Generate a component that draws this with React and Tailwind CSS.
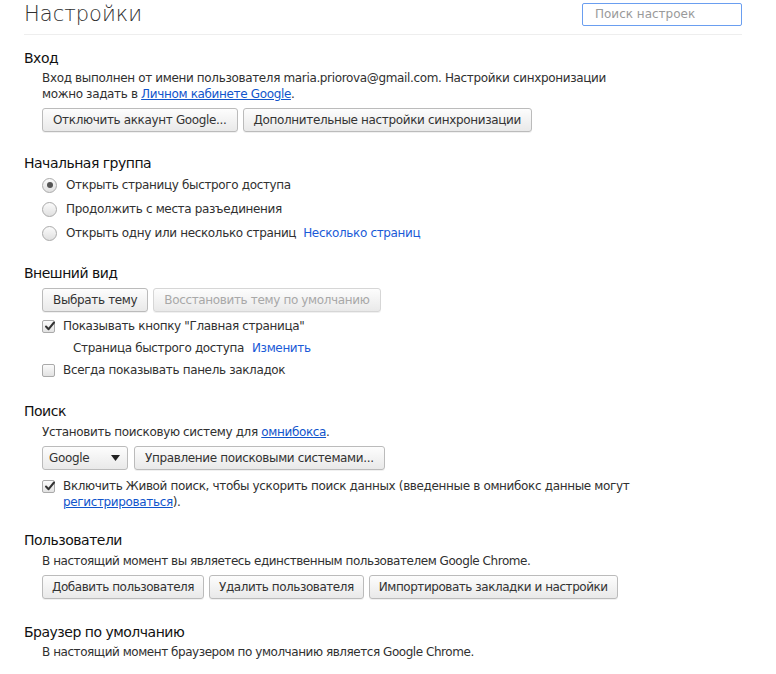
import React from "react";

const Btn = ({ children, disabled, className = "px-[10px]" }) => (
  <button
    className={
      "h-[24px] rounded-[3px] border text-[12px] tracking-[-0.35px] leading-none whitespace-nowrap bg-gradient-to-b from-[#fdfdfd] to-[#e9e9e9] shadow-[0_1px_0_rgba(0,0,0,0.06)] " +
      (disabled ? "border-[#d6d6d6] text-[#a8a8a8]" : "border-[#bbbbbb] text-[#333]") +
      " " +
      className
    }
  >
    {children}
  </button>
);

const Radio = ({ checked }) => (
  <span className="w-[15px] h-[15px] rounded-full border border-[#aaaaaa] bg-gradient-to-b from-[#fbfbfb] to-[#e0e0e0] flex items-center justify-center shrink-0">
    {checked && <span className="w-[6px] h-[6px] rounded-full bg-[#555]" />}
  </span>
);

const Check = ({ checked }) => (
  <span className="w-[13px] h-[13px] rounded-[2px] border border-[#aaaaaa] bg-gradient-to-b from-[#fbfbfb] to-[#e2e2e2] flex items-center justify-center shrink-0 relative">
    {checked && (
      <svg width="12" height="12" viewBox="0 0 12 12" className="absolute left-[1px] top-[-1px]">
        <path d="M2 6.5 L4.6 9.2 L10 2.5" fill="none" stroke="#333" strokeWidth="2" strokeLinecap="round" strokeLinejoin="round" />
      </svg>
    )}
  </span>
);

const H = ({ children, className = "" }) => (
  <div className={"h-[20px] leading-[20px] text-[14px] tracking-[-0.5px] text-[#111] " + className}>{children}</div>
);

export default function App() {
  return (
    <div className="w-[776px] h-[674px] bg-white font-['DejaVu_Sans',sans-serif] text-[#303030] text-[12px] tracking-[-0.35px] pl-[24px] pr-[34px] overflow-hidden">
      <div className="h-[35px] flex items-center justify-between pb-[6px] border-b border-[#eeeeee]">
        <div className="text-[21px] leading-none text-[#303030] font-light tracking-normal">Настройки</div>
        <div className="w-[160px] h-[23px] border border-[#6a9ef0] rounded-[2px] flex items-center pl-[12px] text-[12px] tracking-normal text-[#9a9a9a]">
          Поиск настроек
        </div>
      </div>

      {/* Вход */}
      <H className="mt-[13px]">Вход</H>
      <div className="pl-[18px] mt-[2px]">
        <div className="leading-[16px]">
          Вход выполнен от имени пользователя maria.priorova@gmail.com. Настройки синхронизации
          <br />
          можно задать в <span className="text-[#1155cc] underline">Личном кабинете Google</span>.
        </div>
        <div className="flex gap-[5px] mt-[6px]">
          <Btn>Отключить аккаунт Google...</Btn>
          <Btn>Дополнительные настройки синхронизации</Btn>
        </div>
      </div>

      {/* Начальная группа */}
      <H className="mt-[21px]">Начальная группа</H>
      <div className="pl-[18px]">
        <div className="h-[24px] flex items-center gap-[9px]">
          <Radio checked />
          <span>Открыть страницу быстрого доступа</span>
        </div>
        <div className="h-[24px] flex items-center gap-[9px]">
          <Radio />
          <span>Продолжить с места разъединения</span>
        </div>
        <div className="h-[24px] flex items-center gap-[9px]">
          <Radio />
          <span>Открыть одну или несколько страниц</span>
          <span className="text-[#1a5ad7] ml-[-2px]">Несколько страниц</span>
        </div>
      </div>

      {/* Внешний вид */}
      <H className="mt-[18px]">Внешний вид</H>
      <div className="pl-[18px]">
        <div className="flex gap-[5px] mt-[5px]">
          <Btn>Выбрать тему</Btn>
          <Btn disabled>Восстановить тему по умолчанию</Btn>
        </div>
        <div className="mt-[3px] h-[22px] flex items-center gap-[8px]">
          <Check checked />
          <span>Показывать кнопку "Главная страница"</span>
        </div>
        <div className="h-[22px] flex items-center pl-[31px] gap-[8px]">
          <span>Страница быстрого доступа</span>
          <span className="text-[#1a5ad7]">Изменить</span>
        </div>
        <div className="h-[22px] flex items-center gap-[8px]">
          <Check />
          <span>Всегда показывать панель закладок</span>
        </div>
      </div>

      {/* Поиск */}
      <H className="mt-[20px]">Поиск</H>
      <div className="pl-[18px]">
        <div className="mt-[3px] leading-[16px]">
          Установить поисковую систему для <span className="text-[#1155cc] underline">омнибокса</span>.
        </div>
        <div className="flex gap-[6px] mt-[6px]">
          <div className="h-[24px] w-[86px] rounded-[3px] border border-[#bbbbbb] bg-gradient-to-b from-[#fdfdfd] to-[#e9e9e9] flex items-center justify-between pl-[6px] pr-[7px] text-[#333]">
            <span>Google</span>
            <svg width="9" height="6" viewBox="0 0 9 6">
              <path d="M0 0 H9 L4.5 6 Z" fill="#222" />
            </svg>
          </div>
          <Btn>Управление поисковыми системами...</Btn>
        </div>
        <div className="mt-[8px] flex gap-[8px]">
          <div className="h-[16px] flex items-center">
            <Check checked />
          </div>
          <div className="leading-[16px]">
            Включить Живой поиск, чтобы ускорить поиск данных (введенные в омнибокс данные могут
            <br />
            <span className="text-[#1155cc] underline">регистрироваться</span>).
          </div>
        </div>
      </div>

      {/* Пользователи */}
      <H className="mt-[20px]">Пользователи</H>
      <div className="pl-[18px]">
        <div className="mt-[3px] leading-[16px] tracking-[-0.45px]">
          В настоящий момент вы являетесь единственным пользователем Google Chrome.
        </div>
        <div className="flex gap-[5px] mt-[6px]">
          <Btn className="px-[9px] tracking-[-0.45px]">Добавить пользователя</Btn>
          <Btn className="px-[9px] tracking-[-0.45px]">Удалить пользователя</Btn>
          <Btn className="px-[9px] tracking-[-0.45px]">Импортировать закладки и настройки</Btn>
        </div>
      </div>

      {/* Браузер по умолчанию */}
      <H className="mt-[23px]">Браузер по умолчанию</H>
      <div className="pl-[18px]">
        <div className="mt-[2px] leading-[16px] tracking-[-0.45px]">
          В настоящий момент браузером по умолчанию является Google Chrome.
        </div>
      </div>
    </div>
  );
}
